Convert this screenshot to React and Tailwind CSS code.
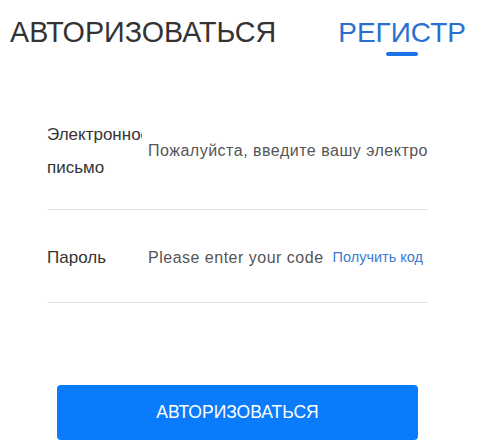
export default function App() {
  return (
    <div className="w-[477px] h-[443px] bg-white overflow-hidden font-['Liberation_Sans',Arial,sans-serif]">
      {/* tabs */}
      <div className="flex items-start pt-[16px]">
        <div className="ml-[10px] text-[28.7px] leading-[33px] text-[#333]">АВТОРИЗОВАТЬСЯ</div>
        <div className="ml-[62px] flex flex-col items-center">
          <div className="text-[28px] leading-[33px] text-[#2a6fd0]">РЕГИСТР</div>
          <div className="mt-[3px] h-[4px] w-[32px] bg-[#1a73e8] rounded-sm" />
        </div>
      </div>

      {/* form */}
      <div className="mx-[47px] mt-[62px] w-[381px]">
        <div className="flex items-center pb-[25px] border-b border-[#e3e3e3]">
          <div className="w-[95px] shrink-0 text-[17px] leading-[33px] text-[#333]">Электронное письмо</div>
          <input
            className="flex-1 min-w-0 h-[42px] pl-[6px] bg-white text-[16px] tracking-[0.5px] text-[#444] placeholder:text-[#555] outline-none"
            placeholder="Пожалуйста, введите вашу электронную почту"
          />
        </div>
        <div className="flex items-center pt-[31px] pb-[28px] border-b border-[#e3e3e3]">
          <div className="w-[95px] shrink-0 text-[17px] leading-[33px] text-[#333]">Пароль</div>
          <input
            className="flex-1 min-w-0 h-[33px] pl-[6px] bg-white text-[16px] tracking-[0.5px] text-[#444] placeholder:text-[#555] outline-none"
            placeholder="Please enter your code"
          />
          <span className="mr-[5px] text-[14.5px] text-[#3a7bd5] whitespace-nowrap">Получить код</span>
        </div>
      </div>

      <div className="mt-[82px] mx-[57px]">
        <button className="w-[361px] h-[55px] bg-[#0a7cfb] rounded-[4px] text-white text-[17.5px]">АВТОРИЗОВАТЬСЯ</button>
      </div>
    </div>
  );
}
